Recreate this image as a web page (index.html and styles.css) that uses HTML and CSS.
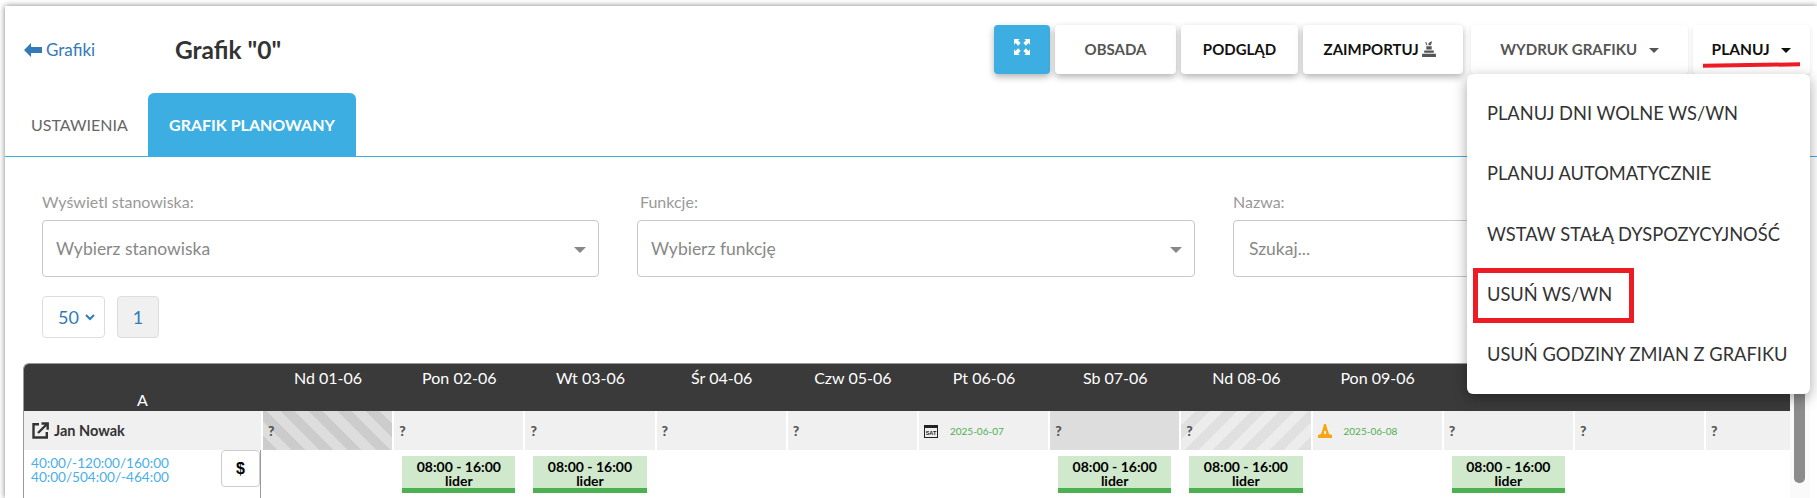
FILE: index.html
```html
<!DOCTYPE html>
<html lang="pl">
<head>
    <meta charset="UTF-8" />
    <title>Grafik</title>
    <link rel="stylesheet" href="styles.css">
</head>
<body>
<div class="panel">

    <!-- Top bar -->
    <div class="top-bar">
        <a class="back-link" href="#">
            <svg class="back-arrow" viewBox="0 0 18 14"><path d="M0 7 7 0v4h11v6H7v4z"/></svg>Grafiki
        </a>
        <h1 class="page-title">Grafik "0"</h1>
        <div class="actions">
            <button class="btn btn-blue">
                <svg width="16" height="16" viewBox="0 0 14 14" fill="#fff">
                    <path d="M0 0h5L3.6 1.4 5.8 3.6 3.6 5.8 1.4 3.6 0 5zM14 0v5l-1.4-1.4-2.2 2.2-2.2-2.2 2.2-2.2L9 0zM0 14V9l1.4 1.4 2.2-2.2 2.2 2.2-2.2 2.2L5 14zM14 14H9l1.4-1.4-2.2-2.2 2.2-2.2 2.2 2.2L14 9z"/>
                </svg>
            </button>
            <button class="btn btn-obsada">Obsada</button>
            <button class="btn btn-dark btn-podglad">Podgląd</button>
            <button class="btn btn-dark btn-import">Zaimportuj
                <svg width="14" height="16" viewBox="0 0 13 15" fill="#555"><path d="M0 15v-3h13v3zM2 11V9h9v2zM4 8V5h5v3zM3 1l1 0 1 3H4zM6 2l3-2 0 2-1 2H6z"/></svg>
            </button>
            <button class="btn btn-print">Wydruk grafiku <span class="caret"></span></button>
            <button class="btn btn-dark btn-plan">Planuj <span class="caret caret-dark"></span></button>
        </div>
    </div>

    <!-- Plan menu -->
    <ul class="plan-menu">
        <li>Planuj dni wolne WS/WN</li>
        <li>Planuj automatycznie</li>
        <li>Wstaw stałą dyspozycyjność</li>
        <li>Usuń WS/WN</li>
        <li>Usuń godziny zmian z grafiku</li>
    </ul>
    <div class="mark-line"></div>
    <div class="mark-box"></div>

    <!-- Tabs -->
    <div class="tabs">
        <a class="tab" href="#">Ustawienia</a>
        <a class="tab tab-active" href="#">Grafik planowany</a>
    </div>

    <!-- Filters -->
    <div class="filters">
        <div class="filter">
            <label>Wyświetl stanowiska:</label>
            <div class="select-box">Wybierz stanowiska<span class="select-arrow"></span></div>
        </div>
        <div class="filter filter-mid">
            <label>Funkcje:</label>
            <div class="select-box">Wybierz funkcję<span class="select-arrow"></span></div>
        </div>
        <div class="filter">
            <label>Nazwa:</label>
            <div class="select-box search-box">Szukaj...</div>
        </div>
    </div>

    <div class="pager">
        <div class="page-size">50
            <svg width="10" height="7" viewBox="0 0 10 7" fill="none" stroke="#337ab7" stroke-width="2"><path d="M1 1l4 4 4-4"/></svg>
        </div>
        <div class="page-num">1</div>
    </div>

    <!-- Schedule -->
    <div class="schedule-wrap">
        <div class="schedule">
            <div class="head head-name">A</div>
            <div class="head">Nd 01-06</div>
            <div class="head">Pon 02-06</div>
            <div class="head">Wt 03-06</div>
            <div class="head">Śr 04-06</div>
            <div class="head">Czw 05-06</div>
            <div class="head">Pt 06-06</div>
            <div class="head">Sb 07-06</div>
            <div class="head">Nd 08-06</div>
            <div class="head">Pon 09-06</div>
            <div class="head">Wt 10-06</div>
            <div class="head">Śr 11-06</div>
            <div class="head">Czw 12-06</div>

            <div class="person">
                <svg width="17" height="17" viewBox="0 0 17 17" fill="none" stroke="#333" stroke-width="2.4"><path d="M7 2.2H1.5v13.3h13.3V10"/><path d="M6 11 15 2M9.5 1.5h6.2v6.2" stroke-width="2.4"/></svg>
                Jan Nowak
            </div>
            <div class="day stripes-dark"><b>?</b></div>
            <div class="day"><b>?</b></div>
            <div class="day"><b>?</b></div>
            <div class="day"><b>?</b></div>
            <div class="day"><b>?</b></div>
            <div class="day">
                <svg class="day-icon" width="14" height="14" viewBox="0 0 14 14">
                    <path d="M0 1h14v13H0z" fill="#222"/><path d="M1 4h12v9H1z" fill="#eee"/>
                    <text x="7" y="10.5" font-size="5.5" font-weight="700" text-anchor="middle" fill="#222" font-family="Liberation Sans">SAT</text>
                </svg>
                <span class="day-date">2025-06-07</span>
            </div>
            <div class="day day-gray"><b>?</b></div>
            <div class="day stripes-light"><b>?</b></div>
            <div class="day">
                <svg class="day-icon" width="14" height="14" viewBox="0 0 14 14" fill="#f7a515">
                    <path d="M6 0h2l1 4 2 6 3 1v3H0v-3l3-1 2-6zM6 7v3h2V7z"/>
                </svg>
                <span class="day-date">2025-06-08</span>
            </div>
            <div class="day"><b>?</b></div>
            <div class="day"><b>?</b></div>
            <div class="day"><b>?</b></div>

            <div class="hours">
                <div class="hours-text">40:00/-120:00/160:00<br>40:00/504:00/-464:00</div>
                <button class="pay-btn">$</button>
            </div>
            <div class="slot"></div>
            <div class="slot"><div class="shift">08:00 - 16:00<br>lider</div></div>
            <div class="slot"><div class="shift">08:00 - 16:00<br>lider</div></div>
            <div class="slot"></div>
            <div class="slot"></div>
            <div class="slot"></div>
            <div class="slot"><div class="shift">08:00 - 16:00<br>lider</div></div>
            <div class="slot"><div class="shift">08:00 - 16:00<br>lider</div></div>
            <div class="slot"></div>
            <div class="slot"><div class="shift">08:00 - 16:00<br>lider</div></div>
            <div class="slot"></div>
            <div class="slot"></div>
        </div>
        <div class="scroll-track"><div class="scroll-thumb"></div></div>
    </div>
</div>
</body>
</html>
```

FILE: styles.css
```css
* {
    margin: 0;
    padding: 0;
    box-sizing: border-box;
}

html, body {
    height: 498px;
    overflow: hidden;
}

body {
    font-family: Lato, 'Open Sans', sans-serif;
    background: #fff;
    color: #333;
}

.panel {
    position: relative;
    margin: 6px 0 0 5px;
    height: 492px;
    background: #fff;
    box-shadow: 0 0 6px rgba(0, 0, 0, 0.5);
}

/* top bar */
.top-bar {
    display: flex;
    align-items: center;
    height: 87px;
    padding: 19px 7px 19px 19px;
}

.back-link {
    display: flex;
    align-items: center;
    width: 151px;
    color: #337ab7;
    font-size: 17px;
    text-decoration: none;
}

.back-arrow {
    width: 18px;
    height: 14px;
    margin-right: 4px;
    fill: #337ab7;
}

.page-title {
    font-size: 24.5px;
    font-weight: 700;
    color: #333;
}

.actions {
    display: flex;
    gap: 5px;
    margin-left: auto;
}

.btn {
    height: 49px;
    padding-bottom: 2px;
    border: none;
    border-radius: 4px;
    background: #fff;
    font-family: inherit;
    font-size: 15px;
    font-weight: 700;
    text-transform: uppercase;
    color: #555;
    box-shadow: 0 3px 7px rgba(0, 0, 0, 0.3);
}

.btn-blue {
    width: 56px;
    background: #3daee2;
}

.btn-obsada { width: 121px; }
.btn-podglad { width: 117px; }
.btn-import { width: 160px; margin-right: 3px; padding-right: 6px; }
.btn-print { width: 217px; }
.btn-plan { width: 117px; font-size: 15.5px; }
.btn-dark { color: #111; }

.btn-print,
.btn-plan {
    box-shadow: 0 2px 4px rgba(0, 0, 0, 0.12);
}

.btn-import svg {
    vertical-align: -2px;
}

.caret {
    display: inline-block;
    margin-left: 8px;
    vertical-align: 2px;
    border-left: 5px solid transparent;
    border-right: 5px solid transparent;
    border-top: 5px solid #555;
}

.caret-dark {
    border-top-color: #111;
}

/* dropdown */
.plan-menu {
    position: absolute;
    z-index: 5;
    top: 68px;
    left: 1462px;
    width: 343px;
    height: 320px;
    padding-top: 9px;
    list-style: none;
    background: #fff;
    border-radius: 6px;
    box-shadow: 0 4px 14px rgba(0, 0, 0, 0.35);
}

.plan-menu li {
    height: 60.3px;
    padding-left: 20px;
    line-height: 60.3px;
    font-size: 18.3px;
    text-transform: uppercase;
    color: #333;
}

.mark-line {
    position: absolute;
    z-index: 6;
    top: 57px;
    left: 1698px;
    width: 97px;
    height: 4px;
    background: #ed1c24;
    transform: rotate(-0.8deg);
}

.mark-box {
    position: absolute;
    z-index: 6;
    top: 262px;
    left: 1468px;
    width: 161px;
    height: 55px;
    border: 5px solid #ed1c24;
}

/* tabs */
.tabs {
    display: flex;
    height: 64px;
    border-bottom: 1px solid #3daee2;
}

.tab {
    display: flex;
    align-items: center;
    padding: 0 20px;
    font-size: 16px;
    text-transform: uppercase;
    text-decoration: none;
    color: #666;
}

.tab-active {
    width: 208px;
    margin-left: 0;
    justify-content: center;
    padding: 0;
    font-weight: 700;
    color: #fff;
    background: #3daee2;
    border-radius: 6px 6px 0 0;
}

.tabs .tab:first-child {
    width: 143px;
    padding-left: 26px;
}

/* filters */
.filters {
    display: grid;
    grid-template-columns: 557px 558px 557px;
    gap: 38px;
    padding: 35px 0 0 37px;
}

.filter label {
    display: block;
    height: 28px;
    font-size: 16px;
    line-height: 20px;
    color: #999;
}

.filter-mid label {
    padding-left: 3px;
}

.select-box {
    position: relative;
    height: 57px;
    padding-left: 13px;
    line-height: 55px;
    font-size: 17.5px;
    color: #888;
    border: 1px solid #c8c8c8;
    border-radius: 4px;
}

.search-box {
    padding-left: 15px;
}

.select-arrow {
    position: absolute;
    top: 26px;
    right: 12px;
    border-left: 6px solid transparent;
    border-right: 6px solid transparent;
    border-top: 6px solid #888;
}

.pager {
    display: flex;
    gap: 12px;
    margin: 19px 0 0 37px;
    font-size: 18px;
    color: #337ab7;
}

.page-size {
    display: flex;
    align-items: center;
    gap: 6px;
    width: 63px;
    height: 42px;
    padding-left: 15px;
    border: 1px solid #ddd;
    border-radius: 4px;
}

.page-num {
    width: 42px;
    height: 42px;
    line-height: 40px;
    text-align: center;
    background: #f0f0f0;
    border: 1px solid #ddd;
    border-radius: 4px;
}

/* schedule */
.schedule-wrap {
    display: flex;
    margin: 25px 0 0 18px;
}

.schedule {
    display: grid;
    grid-template-columns: 237px repeat(12, 131.2px);
    grid-template-rows: 47px 39px 48px;
    width: 1767px;
    overflow: hidden;
    border-radius: 6px 0 0 0;
    border-left: 1px solid #999;
    border-top: 1px solid #999;
}

.head {
    padding: 4px 0 0 3px;
    font-size: 16px;
    line-height: 20px;
    text-align: center;
    color: #fff;
    background: #3a3a3a;
}

.head-name {
    padding: 26px 0 0;
    font-weight: 400;
}

.person {
    display: flex;
    align-items: center;
    gap: 5px;
    padding-left: 8px;
    font-size: 14.5px;
    font-weight: 700;
    background: #f0f0f0;
}

.day {
    display: flex;
    align-items: center;
    padding-left: 5px;
    border-left: 2px solid #fff;
    background: #f0f0f0;
}

.day b {
    font-size: 14px;
    font-weight: 900;
    color: #555;
}

.day-gray { background: #ddd; }

.stripes-dark {
    background: repeating-linear-gradient(45deg, #ccc 0 10px, #ddd 10px 20px);
}

.stripes-light {
    background: repeating-linear-gradient(135deg, #ececec 0 10px, #e0e0e0 10px 20px);
}

.day-icon {
    flex: none;
}

.day-date {
    margin-left: 12px;
    font-size: 10px;
    color: #4caf50;
}

.hours {
    display: flex;
    justify-content: space-between;
    padding-left: 7px;
    border-right: 1px solid #999;
}

.hours-text {
    padding-top: 6px;
    font-size: 13.6px;
    line-height: 14px;
    color: #4aaee8;
}

.pay-btn {
    width: 39px;
    height: 37px;
    font-family: 'Liberation Sans', sans-serif;
    font-size: 16px;
    font-weight: 700;
    background: #fff;
    border: 1px solid #ccc;
    border-radius: 4px;
}

.slot {
    padding: 6px 8px 0 10px;
}

.shift {
    height: 37px;
    font-size: 14px;
    font-weight: 700;
    line-height: 14px;
    padding-top: 4px;
    text-align: center;
    color: #000;
    background: #d0e8cc;
    border-bottom: 5px solid #4caf50;
}

.scroll-track {
    position: relative;
    flex: none;
    width: 20px;
    height: 135px;
    background: #fafafa;
}

.scroll-thumb {
    position: absolute;
    top: 0;
    left: 4px;
    width: 11px;
    height: 120px;
    background: #8c8c8c;
    border-radius: 5px;
}
```
